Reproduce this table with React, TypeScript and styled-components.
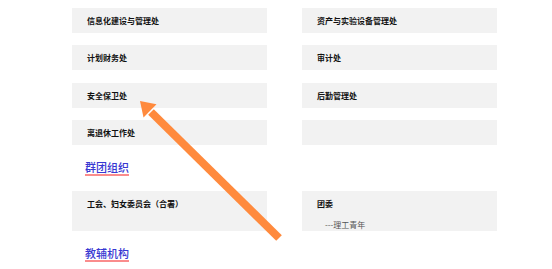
import React from 'react';
import styled, { createGlobalStyle } from 'styled-components';

type TUnit = {
  name: string;
  sub?: string;
};

const offices: TUnit[] = [
  { name: '信息化建设与管理处' },
  { name: '资产与实验设备管理处' },
  { name: '计划财务处' },
  { name: '审计处' },
  { name: '安全保卫处' },
  { name: '后勤管理处' },
  { name: '离退休工作处' },
  { name: '' },
];

const groups: TUnit[] = [
  { name: '工会、妇女委员会（合署）' },
  { name: '团委', sub: '---理工青年' },
];

const GlobalStyle = createGlobalStyle`
  body {
    margin: 0;
    background: #fff;
    font-family: 'Noto Sans CJK SC', 'Noto Sans', sans-serif;
  }
`;

const UnitGrid = ({ units, rowHeight }: { units: TUnit[]; rowHeight?: number }) => (
  <Grid $rowHeight={rowHeight}>
    {units.map((u, i) => (
      <Card key={i}>
        {u.name && <CardTitle>{u.name}</CardTitle>}
        {u.sub && <CardSub>{u.sub}</CardSub>}
      </Card>
    ))}
  </Grid>
);

export default function App() {
  return (
    <>
      <GlobalStyle />
      <Page>
        <UnitGrid units={offices} rowHeight={25} />
        <Heading>群团组织</Heading>
        <UnitGrid units={groups} />
        <Heading>教辅机构</Heading>
        <Pointer viewBox="0 0 552 269" width={552} height={269}>
          <line x1={279} y1={238} x2={151} y2={112} stroke="#ff8a3d" strokeWidth={8} />
          <polygon points="140,101 156.5,104.2 143.5,117.4" fill="#ff8a3d" />
        </Pointer>
      </Page>
    </>
  );
}

const Page = styled.div`
  position: relative;
  width: 552px;
  height: 269px;
  overflow: hidden;
  box-sizing: border-box;
  padding: 8px 0 0 72px;
`;

const Grid = styled.div<{ $rowHeight?: number }>`
  display: grid;
  grid-template-columns: 195px 195px;
  column-gap: 35px;
  row-gap: 12.4px;
  grid-auto-rows: ${(p) => (p.$rowHeight ? `${p.$rowHeight}px` : 'auto')};
`;

const Card = styled.div`
  background: #f2f2f2;
  box-sizing: border-box;
  padding: 8px 15px 2px;
  min-height: 25px;
`;

const CardTitle = styled.div`
  font-size: 8px;
  line-height: 9px;
  font-weight: 700;
  color: #111;
  white-space: nowrap;
`;

const CardSub = styled.div`
  margin-top: 12px;
  padding-left: 8px;
  font-size: 8px;
  line-height: 9px;
  color: #555;
  white-space: nowrap;
`;

const Heading = styled.div`
  display: table;
  margin: 16px 0 15px 13px;
  font-size: 11px;
  line-height: 13px;
  font-weight: 500;
  color: #3838d2;
  border-bottom: 2px solid #fa8c8c;
`;

const Pointer = styled.svg`
  position: absolute;
  left: 0;
  top: 0;
  pointer-events: none;
`;
